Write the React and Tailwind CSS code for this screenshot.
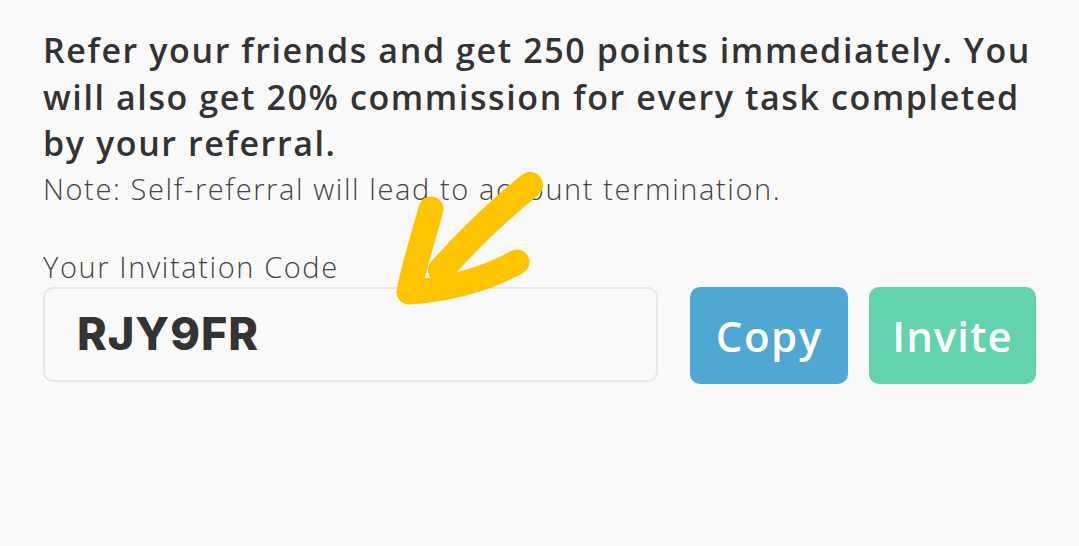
import React from 'react';

function ArrowScribble() {
  return (
    <svg
      className="pointer-events-none absolute left-0 top-0"
      width="1079"
      height="546"
      viewBox="0 0 1079 546"
      fill="none"
    >
      <path d="M530 185 C 505 205, 470 238, 441 270" stroke="#ffc400" strokeWidth="26" strokeLinecap="round" />
      <path d="M431 209 C 424 235, 414 265, 409 292 C 445 290, 485 280, 517 262" stroke="#ffc400" strokeWidth="25" strokeLinecap="round" strokeLinejoin="round" />
    </svg>
  );
}

export default function App() {
  return (
    <div className="relative h-[546px] w-[1079px] overflow-hidden bg-[#f9f9f9] font-['Open_Sans','Liberation_Sans',sans-serif] text-[#333]">
      <div className="px-[43px] pt-[27px]">
        <p className="w-[1000px] text-[34px] font-semibold leading-[46.5px] tracking-[1.6px]">
          Refer your friends and get 250 points immediately. You will also get 20% commission for every task completed by your referral.
        </p>
        <p className="mt-[4px] text-[29px] font-light leading-[36px] tracking-[1.6px] text-[#444]">
          Note: Self-referral will lead to account termination.
        </p>

        <label className="mt-[42px] block text-[29px] font-light leading-[36px] tracking-[1.6px] text-[#444]">
          Your Invitation Code
        </label>

        <div className="mt-[2px] flex items-start">
          <div className="flex h-[95px] w-[616px] items-center rounded-[10px] border-2 border-[#e6e6e6] px-[32px]">
            <span className="font-['Inter',sans-serif] text-[45px] font-extrabold tracking-[1px] text-[#333]">RJY9FR</span>
          </div>
          <button className="ml-[32px] h-[97px] w-[158px] rounded-[10px] bg-[#4ea8d2] text-[42px] font-semibold tracking-[1.5px] text-white">
            Copy
          </button>
          <button className="ml-[21px] h-[97px] w-[167px] rounded-[10px] bg-[#63d2ae] text-[42px] font-semibold tracking-[1px] text-white">
            Invite
          </button>
        </div>
      </div>
      <ArrowScribble />
    </div>
  );
}
